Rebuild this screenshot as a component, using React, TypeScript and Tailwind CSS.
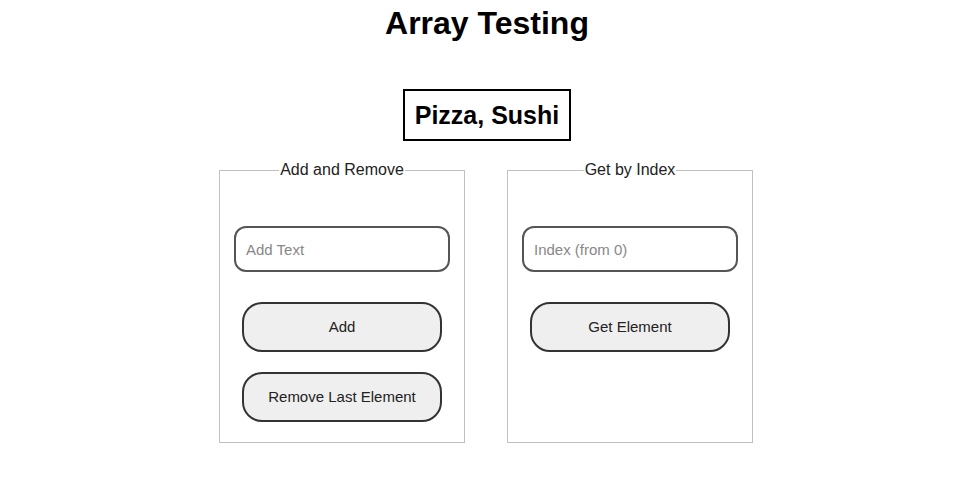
import React, { useState } from "react";

const font = { fontFamily: '"Liberation Sans", Arial, sans-serif' };

export default function App() {
  const [items, setItems] = useState<string[]>(["Pizza", "Sushi"]);
  const [text, setText] = useState("");
  const [index, setIndex] = useState("");

  return (
    <div className="w-[954px] h-[477px] bg-white text-black pl-[18px]" style={font}>
      <div className="flex flex-col items-center">
        <h1 className="mt-[5px] ml-[2px] text-[32px] leading-[37px] font-bold">Array Testing</h1>

        {/* Current array */}
        <div className="mt-[47px] ml-[2px] border-2 border-black px-[10px] py-[10px] text-[25px] leading-[28px] font-bold">
          {items.join(", ")}
        </div>

        <div className="mt-[20px] flex gap-[42px]">
          {/* Add and Remove */}
          <fieldset className="w-[246px] min-w-0 h-[282px] border border-[#c0c0c0] px-[14px]">
            <legend className="mx-auto px-[1px] text-[16px] leading-[18px] text-[#222]">
              Add and Remove
            </legend>
            <div className="flex flex-col items-center pt-[47px]">
              <input
                value={text}
                onChange={(e) => setText(e.target.value)}
                placeholder="Add Text"
                className="w-[216px] h-[46px] rounded-[12px] border-2 border-[#555] px-[10px] text-[15px] placeholder:text-[#888] outline-none"
              />
              <button
                onClick={() => {
                  if (text) setItems([...items, text]);
                  setText("");
                }}
                className="mt-[30px] w-[200px] h-[50px] rounded-[20px] border-2 border-[#333] bg-[#efefef] text-[15px] text-[#222]"
              >
                Add
              </button>
              <button
                onClick={() => setItems(items.slice(0, -1))}
                className="mt-[20px] w-[200px] h-[50px] rounded-[20px] border-2 border-[#333] bg-[#efefef] text-[15px] text-[#222]"
              >
                Remove Last Element
              </button>
            </div>
          </fieldset>

          {/* Get by Index */}
          <fieldset className="w-[246px] min-w-0 h-[282px] border border-[#c0c0c0] px-[14px]">
            <legend className="mx-auto px-[1px] text-[16px] leading-[18px] text-[#222]">
              Get by Index
            </legend>
            <div className="flex flex-col items-center pt-[47px]">
              <input
                value={index}
                onChange={(e) => setIndex(e.target.value)}
                placeholder="Index (from 0)"
                className="w-[216px] h-[46px] rounded-[12px] border-2 border-[#555] px-[10px] text-[15px] placeholder:text-[#888] outline-none"
              />
              <button
                onClick={() => {
                  const i = parseInt(index, 10);
                  if (!isNaN(i) && items[i] !== undefined) alert(items[i]);
                }}
                className="mt-[30px] w-[200px] h-[50px] rounded-[20px] border-2 border-[#333] bg-[#efefef] text-[15px] text-[#222]"
              >
                Get Element
              </button>
            </div>
          </fieldset>
        </div>
      </div>
    </div>
  );
}
